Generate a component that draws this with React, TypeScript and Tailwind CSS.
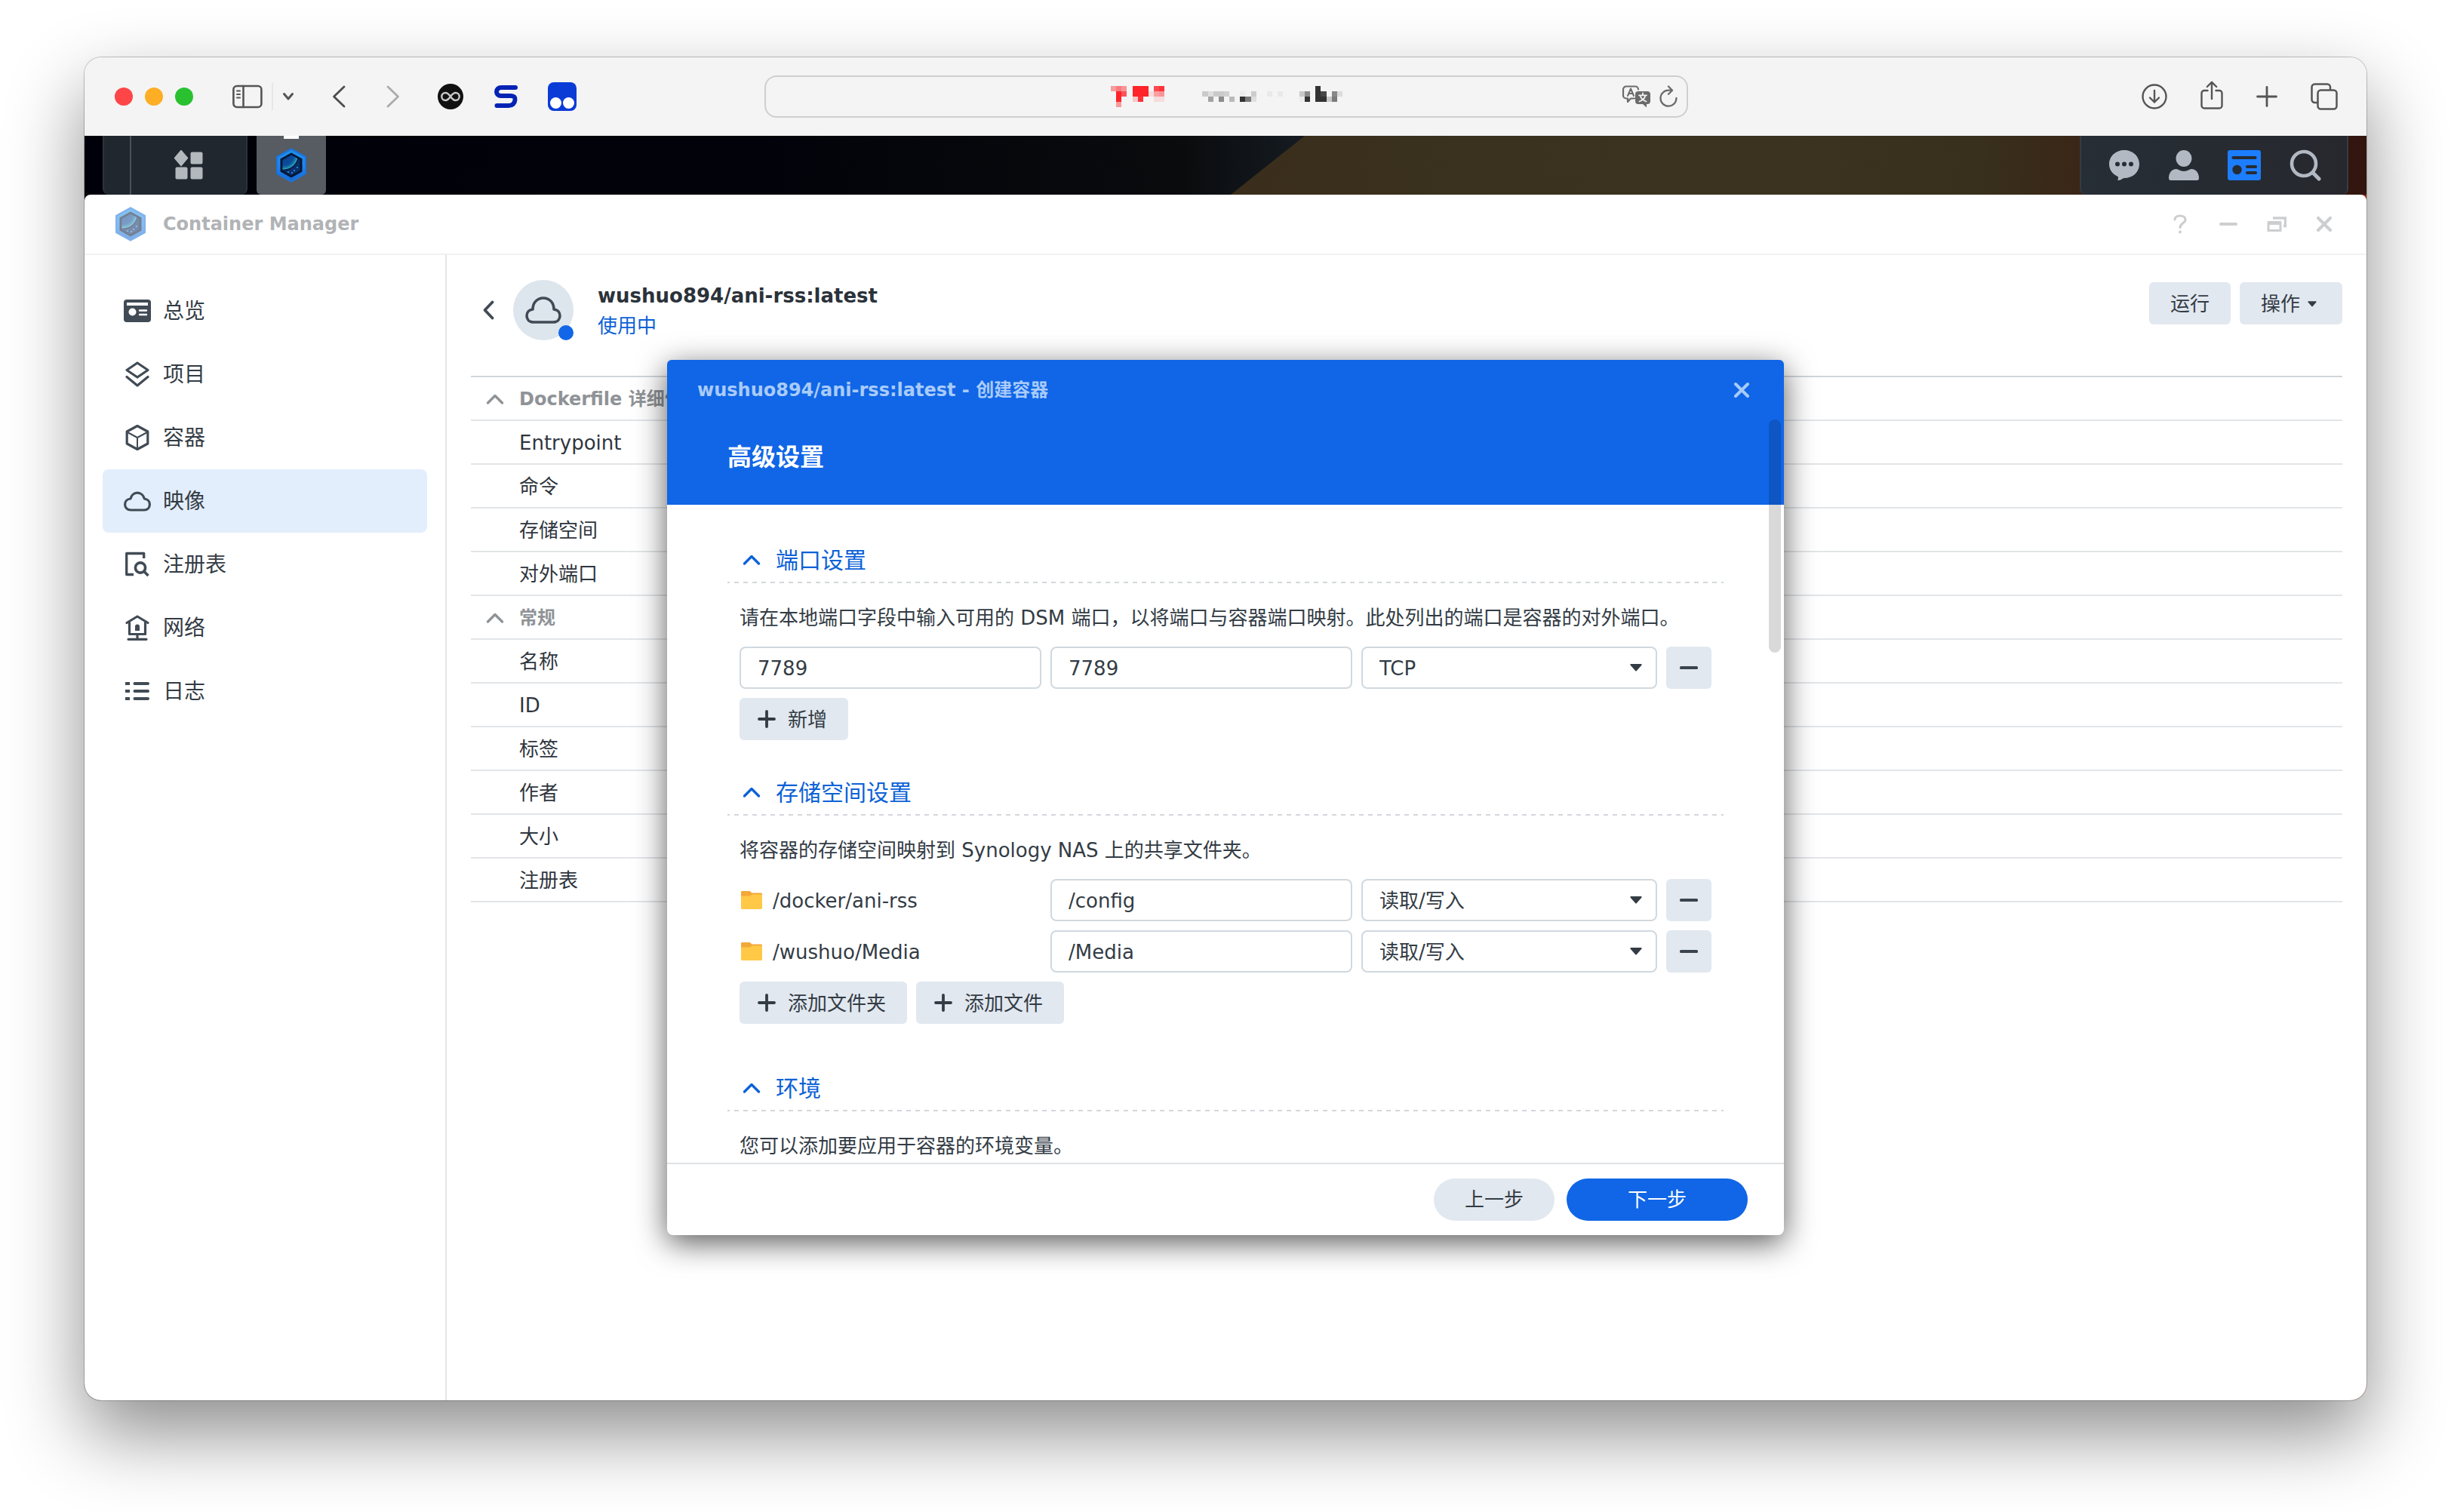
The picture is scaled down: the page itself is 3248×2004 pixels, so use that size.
import React, { useId, useState } from "react";

type IconProps = { className?: string };

/* ---------- browser toolbar icons ---------- */

const SidebarIcon = () => (
  <svg width="40" height="32" viewBox="0 0 40 32" fill="none" stroke="#555" strokeWidth="2.6" strokeLinecap="round">
    <rect x="1.4" y="2" width="37" height="28" rx="4.5" />
    <path d="M14.5 2v28" />
    <path d="M6 8.5h4M6 13h4M6 17.500h4" strokeWidth="2" />
  </svg>
);

const ChevronDownSmall = () => (
  <svg width="16" height="12" viewBox="0 0 16 12" fill="none" stroke="#555" strokeWidth="3" strokeLinecap="round" strokeLinejoin="round">
    <path d="M2.500 2.500l5.500 6.500 5.500-6.500" />
  </svg>
);

const NavChevron = ({ dir, className }: { dir: "left" | "right"; className: string }) => (
  <svg width="18" height="30" viewBox="0 0 18 30" fill="none" stroke="currentColor" strokeWidth="2.800" strokeLinecap="round" strokeLinejoin="round" className={className}>
    <path d={dir === "left" ? "M16 2L2.500 15 16 28" : "M2 2l13.500 13L2 28"} />
  </svg>
);

const InfinityBadge = () => (
  <svg width="34" height="34" viewBox="0 0 34 34" fill="none">
    <circle cx="17" cy="17" r="17" fill="#111" />
    <path
      d="M17 17c-2.500-3.500-4.500-5-6.700-5a5 5 0 000 10c2.200 0 4.200-1.500 6.700-5s4.500-5 6.700-5a5 5 0 010 10c-2.200 0-4.200-1.500-6.700-5z"
      stroke="#c9c9c9"
      strokeWidth="2.400"
    />
  </svg>
);

const SwooshBadge = () => (
  <svg width="34" height="34" viewBox="0 0 34 34" fill="none" stroke="#0523b4" strokeWidth="6" strokeLinejoin="round" strokeLinecap="round">
    <path d="M29 5H10.500C6 5 4 7.500 4 10.500S6 16 10 16h13c4.500 0 6 2.300 5.500 5.500-.5 4.500-3.500 7.500-8.500 7.500H4.500" />
  </svg>
);

const EyesBadge = () => (
  <svg width="38" height="38" viewBox="0 0 38 38">
    <rect width="38" height="38" rx="8" fill="#0a3bd6" />
    <circle cx="10.500" cy="27.500" r="7.500" fill="#fff" />
    <circle cx="27.500" cy="27.500" r="7.500" fill="#fff" />
  </svg>
);

const TranslateIcon = () => (
  <svg width="40" height="30" viewBox="0 0 40 30" fill="none" strokeLinejoin="round" strokeLinecap="round">
    <path d="M17 17.500h-5L8 22v-4.500H6A4 4 0 012 13.500v-8a4 4 0 014-4h12a4 4 0 014 4" stroke="#6b6b6b" strokeWidth="2.200" />
    <path d="M8 14l4-9.500L16 14M9.400 11h5.200" stroke="#6b6b6b" strokeWidth="2" />
    <path d="M22 8h12a4 4 0 014 4v9a4 4 0 01-4 4h-1v4.500L28 25h-6a4 4 0 01-4-4v-9a4 4 0 014-4z" fill="#6b6b6b" />
    <path d="M28 10.500v2.500M23 13.300h10M31.500 13.500c-1 4-4 6.500-8 8M24.500 13.500c1 4 4 6.500 8 8" stroke="#f3f3f3" strokeWidth="1.800" />
  </svg>
);

const ReloadIcon = () => (
  <svg width="24" height="30" viewBox="0 0 24 30" fill="none" stroke="#6b6b6b" strokeWidth="2.300" strokeLinecap="round" strokeLinejoin="round">
    <path d="M22.500 17A10.500 10.500 0 1112 6.600h4.500" />
    <path d="M12 1.500l5 5.200-5 5" />
  </svg>
);

const DownloadIcon = () => (
  <svg width="34" height="34" viewBox="0 0 34 34" fill="none" stroke="#555" strokeWidth="2.400" strokeLinecap="round" strokeLinejoin="round">
    <circle cx="17" cy="17" r="15.500" />
    <path d="M17 9v15.500M11 18.500l6 6 6-6" />
  </svg>
);

const ShareIcon = () => (
  <svg width="30" height="38" viewBox="0 0 30 38" fill="none" stroke="#555" strokeWidth="2.400" strokeLinecap="round" strokeLinejoin="round">
    <path d="M9.500 13H5a3.500 3.500 0 00-3.500 3.500V33A3.500 3.500 0 005 36.500h20a3.500 3.500 0 003.500-3.500V16.500A3.500 3.500 0 0025 13h-4.500" />
    <path d="M15 24V2M8.800 8L15 1.800 21.200 8" />
  </svg>
);

const NewTabIcon = () => (
  <svg width="28" height="28" viewBox="0 0 28 28" fill="none" stroke="#555" strokeWidth="2.800" strokeLinecap="round">
    <path d="M14 1.500v25M1.500 14h25" />
  </svg>
);

const TabsIcon = () => (
  <svg width="36" height="36" viewBox="0 0 36 36" fill="none" stroke="#555" strokeWidth="2.500" strokeLinejoin="round">
    <path d="M9 26H5.500A4 4 0 011.500 22V5.500a4 4 0 014-4H22a4 4 0 014 4V9" />
    <rect x="9.500" y="9.500" width="25" height="25" rx="4" />
  </svg>
);

/* ---------- desktop bar icons ---------- */

const LauncherIcon = () => (
  <svg width="40" height="40" viewBox="0 0 40 40" fill="#b3b8bd">
    <path d="M10 0.500l8.500 10L10 20.500 1.500 10.500z" stroke="#b3b8bd" strokeWidth="1.500" strokeLinejoin="round" />
    <rect x="22.500" y="2.500" width="16" height="16" rx="2" />
    <rect x="2.500" y="22.500" width="16" height="16" rx="2" />
    <rect x="22.500" y="22.500" width="16" height="16" rx="2" />
  </svg>
);

const ContainerLogo = ({ className }: IconProps) => {
  const id = useId();
  return (
    <svg width="42" height="46" viewBox="0 0 42 46" className={className}>
      <defs>
        <linearGradient id={id + "a"} x1="0" y1="0" x2="0" y2="1">
          <stop offset="0" stopColor="#1f8fe6" />
          <stop offset="0.5" stopColor="#2187f0" />
          <stop offset="1" stopColor="#1467d2" />
        </linearGradient>
        <radialGradient id={id + "b"} gradientUnits="userSpaceOnUse" cx="11" cy="10" r="18.5">
          <stop offset="0" stopColor="#0a3f8c" />
          <stop offset="0.7" stopColor="#0b4c9a" />
          <stop offset="0.88" stopColor="#1678a8" />
          <stop offset="1" stopColor="#3cb6c0" />
        </radialGradient>
        <clipPath id={id + "c"}>
          <path d="M21 9.500l11.500 6.400v14.200L21 36.500 9.500 30.100V15.900z" />
        </clipPath>
      </defs>
      <path d="M21 1.500L40 12v22L21 44.500 2 34V12z" fill={"url(#" + id + "a)"} stroke="#1a74dc" strokeWidth="2" strokeLinejoin="round" />
      <path d="M21 6.500l14.500 8v17L21 39.500 6.500 31.500v-17z" fill="#061632" />
      <g clipPath={"url(#" + id + "c)"}>
        <rect width="42" height="46" fill="#07316e" />
        <circle cx="11" cy="10" r="20.500" fill="#06204e" />
        <circle cx="11" cy="10" r="18.5" fill={"url(#" + id + "b)"} />
        <circle cx="17" cy="32" r="0.900" fill="#4aa4f5" />
        <circle cx="22" cy="33" r="0.900" fill="#4aa4f5" />
        <circle cx="25" cy="30" r="0.900" fill="#4aa4f5" />
        <circle cx="29" cy="26" r="0.900" fill="#4aa4f5" />
      </g>
    </svg>
  );
};

const ChatIcon = () => (
  <svg width="42" height="42" viewBox="0 0 42 42">
    <path d="M21 1c11 0 20 8 20 18.500S32.500 38 21 38c-1.500 0-2.500 1-4 2-1.500.8-3.500 1.200-5 1 1-1.500 1.200-3 .8-4.800C5.500 33 1 27 1 19.500 1 9 10 1 21 1z" fill="#b3b9c3" />
    <circle cx="12" cy="19.500" r="3" fill="#262c33" />
    <circle cx="21" cy="19.500" r="3" fill="#262c33" />
    <circle cx="30" cy="19.500" r="3" fill="#262c33" />
  </svg>
);

const UserIcon = () => (
  <svg width="42" height="42" viewBox="0 0 42 42" fill="#b3b9c3">
    <ellipse cx="21" cy="12" rx="10.500" ry="11" />
    <path d="M1 38c0-7 4-12 10-12 2.500 0 5 3 10 3s7.500-3 10-3c6 0 10 5 10 12 0 2-1 3-2.500 3h-35C2 41 1 40 1 38z" />
  </svg>
);

const WidgetIcon = () => (
  <svg width="46" height="42" viewBox="0 0 46 42">
    <rect x="1" y="1" width="44" height="40" rx="3" fill="#1c7dff" />
    <path d="M8.500 11h29M27 23h11M27 31h11" stroke="#262c33" strokeWidth="4.200" strokeLinecap="round" />
    <circle cx="13.500" cy="27" r="6.200" fill="#262c33" />
  </svg>
);

const SearchIcon = () => (
  <svg width="42" height="42" viewBox="0 0 42 42" fill="none" stroke="#b3b9c3" strokeLinecap="round">
    <circle cx="19" cy="19" r="16" strokeWidth="4.600" />
    <path d="M31 31l8 8" strokeWidth="5" />
  </svg>
);

/* ---------- app navigation icons ---------- */

const OverviewIcon = () => (
  <svg width="36" height="36" viewBox="0 0 36 36">
    <rect x="0" y="3" width="36" height="30" rx="4" fill="#414b55" />
    <rect x="4" y="7" width="28" height="4" fill="#fff" />
    <circle cx="11.500" cy="19.500" r="5" fill="#fff" />
    <path d="M21 17.500h9M21 23h9" stroke="#fff" strokeWidth="2.400" strokeLinecap="round" />
  </svg>
);

const ProjectIcon = () => (
  <svg width="36" height="36" viewBox="0 0 36 36" fill="none" stroke="#414b55" strokeWidth="3.200" strokeLinejoin="round" strokeLinecap="round">
    <path d="M18 3l14 9.500L18 22 4 12.500z" />
    <path d="M4 21.500L18 33l14-11.500" />
  </svg>
);

const CubeIcon = () => (
  <svg width="36" height="36" viewBox="0 0 36 36" fill="none" stroke="#414b55" strokeLinejoin="round" strokeLinecap="round">
    <path d="M18 2.500l13.800 7.500v16L18 33.500 4.200 26V10z" strokeWidth="3.200" />
    <path d="M6 11.500l12 6.500 12-6.500M18 18v14" strokeWidth="2" />
  </svg>
);

const CloudNavIcon = () => (
  <svg width="36" height="36" viewBox="0 0 36 36" fill="none" stroke="#414b55" strokeWidth="3.200" strokeLinejoin="round">
    <path d="M9.500 30C4.500 30 1.600 26.800 1.600 22.500c0-4 3-7 7.400-7.500 1-4.500 4.500-7.800 9-7.800s8.300 3.300 9.300 7.800c4 .5 7.100 3.600 7.100 7.500 0 4.300-2.900 7.500-7.400 7.500z" />
  </svg>
);

const RegistryIcon = () => (
  <svg width="36" height="36" viewBox="0 0 36 36" fill="none" stroke="#414b55" strokeWidth="3.300" strokeLinejoin="round">
    <path d="M13 31.500H3.700v-28h23V10" />
    <circle cx="22" cy="22.500" r="6.600" strokeWidth="3.600" />
    <path d="M27 27.500l5.500 5.500" strokeWidth="3.600" />
  </svg>
);

const NetworkIcon = () => (
  <svg width="36" height="36" viewBox="0 0 36 36" fill="none" stroke="#414b55" strokeWidth="3.200" strokeLinejoin="round" strokeLinecap="round">
    <path d="M4 11.500L18 3l14 8.500M7.500 11v15.500h21V11M18 27v5M6 33.300h24" />
    <path d="M18 13.500a3 3 0 013 3V22h-6v-5.500a3 3 0 013-3z" fill="#414b55" stroke="none" />
  </svg>
);

const LogIcon = () => (
  <svg width="36" height="36" viewBox="0 0 36 36" fill="none" stroke="#414b55" strokeWidth="4">
    <path d="M2 8h6M2 18h6M2 28h6" />
    <path d="M14.500 8H32M14.500 18H32M14.500 28H32" strokeLinecap="round" />
  </svg>
);

/* ---------- shared glyphs ---------- */

const ChevronUp = ({ className }: IconProps) => (
  <svg width="24" height="16" viewBox="0 0 24 16" fill="none" stroke="currentColor" strokeWidth="3.400" strokeLinecap="round" strokeLinejoin="round" className={className}>
    <path d="M2.500 13L12 3.500 21.500 13" />
  </svg>
);

const Caret = ({ className }: IconProps) => (
  <svg width="16" height="10" viewBox="0 0 16 10" fill="#333c45" className={className}>
    <path d="M1.500 0h13c1 0 1.500 1 .8 1.800L8.900 9a1.200 1.200 0 01-1.800 0L.700 1.800C0 1 .5 0 1.500 0z" />
  </svg>
);

const PlusIcon = () => (
  <svg width="24" height="24" viewBox="0 0 24 24" fill="none" stroke="#333c45" strokeWidth="3.800" strokeLinecap="round">
    <path d="M12 2v20M2 12h20" />
  </svg>
);

const MinusIcon = () => (
  <svg width="24" height="4" viewBox="0 0 24 4">
    <rect width="24" height="4" rx="1.500" fill="#3a444e" />
  </svg>
);

const FolderIcon = () => (
  <svg width="28" height="24" viewBox="0 0 28 24">
    <path d="M1.500 0H11c.8 0 1.500.3 2 1l1.300 1.500H26.500c.8 0 1.500.7 1.500 1.500v8H0V1.500C0 .7.700 0 1.500 0z" fill="#f2a838" />
    <path d="M0 6.500h12.500l2-2H28v18c0 .8-.7 1.500-1.500 1.500h-25C.7 24 0 23.300 0 22.500z" fill="#ffc846" />
  </svg>
);

/* ---------- browser chrome ---------- */

/* Redacted address: mosaic cells as [column, row, colour] */
const mosaic: [number, number, string][] = [
  [0, 0, "#f99a9c"], [1, 0, "#f97a7d"], [2, 0, "#f99496"], [4, 0, "#ff2429"], [5, 0, "#ff2429"], [6, 0, "#ff2429"], [8, 0, "#fb4a4f"], [9, 0, "#fb3339"],
  [1, 1, "#ff2429"], [2, 1, "#fb5559"], [4, 1, "#ff2429"], [5, 1, "#ff2429"], [6, 1, "#ff2429"], [7, 1, "#f6dcdc"], [8, 1, "#f9a0a2"], [9, 1, "#f99496"],
  [1, 2, "#ff2429"], [4, 2, "#f7c6c7"], [5, 2, "#fb3339"], [8, 2, "#f6dcdc"], [9, 2, "#f6dcdc"], [1, 3, "#f99a9c"],
  [17, 1, "#cacaca"], [18, 1, "#dedede"], [19, 1, "#cacaca"], [20, 1, "#cacaca"], [21, 1, "#d0d0d0"], [24, 1, "#ececec"], [26, 1, "#cccccc"],
  [18, 2, "#a3a3a3"], [20, 2, "#8c8c8c"], [22, 2, "#bababa"], [24, 2, "#333333"], [25, 2, "#7b7b7b"], [26, 2, "#dedede"],
  [29, 1, "#e9e9e9"], [31, 1, "#e9e9e9"],
  [35, 1, "#c8c8c8"], [36, 1, "#8a8a8a"], [36, 2, "#333333"], [35, 2, "#ebebeb"],
  [38, 0, "#333333"], [38, 1, "#333333"], [38, 2, "#333333"], [39, 1, "#484848"], [39, 2, "#333333"], [40, 2, "#c8c8c8"], [41, 1, "#888888"], [41, 2, "#7b7b7b"], [42, 1, "#dcdcdc"],
];

const RedactedAddress = () => (
  <svg width="307" height="28" viewBox="0 0 43 4" preserveAspectRatio="none" shapeRendering="crispEdges" role="img" aria-label="address">
    {mosaic.map(([x, y, fill]) => (
      <rect key={x + "-" + y} x={x} y={y} width="1" height="1" fill={fill} />
    ))}
  </svg>
);

function BrowserToolbar() {
  return (
    <header className="flex h-[104px] shrink-0 items-center justify-between bg-[#f4f4f4] pr-[38px] pl-10">
      <div className="flex flex-1 items-center">
        <div className="flex gap-4">
          <button aria-label="close" className="size-6 rounded-full bg-[#fe4548]" />
          <button aria-label="minimise" className="size-6 rounded-full bg-[#fdae24]" />
          <button aria-label="zoom" className="size-6 rounded-full bg-[#2ac131]" />
        </div>
        <button aria-label="sidebar" className="ml-[52px]"><SidebarIcon /></button>
        <span className="mx-3 h-9 w-0.5 bg-[#e6e6e6]" />
        <button aria-label="tab groups"><ChevronDownSmall /></button>
        <button aria-label="back" className="ml-[50px]"><NavChevron dir="left" className="text-[#4d4d4d]" /></button>
        <button aria-label="forward" className="ml-[54px]"><NavChevron dir="right" className="text-[#ababab]" /></button>
        <button aria-label="infinity extension" className="ml-[50px]"><InfinityBadge /></button>
        <button aria-label="s extension" className="ml-10"><SwooshBadge /></button>
        <button aria-label="eyes extension" className="ml-[38px]"><EyesBadge /></button>
      </div>
      <div className="relative flex h-14 w-[1224px] items-center justify-center rounded-[16px] border-2 border-[#cfcfcf]">
        <RedactedAddress />
        <div className="absolute right-3 flex items-center gap-2.5">
          <button aria-label="translate"><TranslateIcon /></button>
          <button aria-label="reload"><ReloadIcon /></button>
        </div>
      </div>
      <div className="flex flex-1 items-center justify-end gap-[44px]">
        <button aria-label="downloads"><DownloadIcon /></button>
        <button aria-label="share" className="pb-1"><ShareIcon /></button>
        <button aria-label="new tab"><NewTabIcon /></button>
        <button aria-label="tabs"><TabsIcon /></button>
      </div>
    </header>
  );
}

function DesktopBar() {
  return (
    <div className="relative flex h-[78px] shrink-0 justify-between bg-[linear-gradient(90deg,#00000a_0%,#02030a_30%,#0a0b0d_48%,#141a20_53%)] pr-6 pl-6">
      <div className="absolute inset-y-0 right-0 w-[1505px] bg-[linear-gradient(90deg,#3a2d1b_0%,#3a321f_25%,#3b3220_50%,#38301d_65%,#3a2618_75%,#33150f_100%)] [clip-path:polygon(98px_0,100%_0,100%_100%,0_100%)]" />
      <div className="relative flex gap-3">
        <div className="flex w-[192px] rounded-b-[8px] border-r-2 border-l-2 border-[#2c333b] bg-[#20272e]">
          <div className="w-9 border-r-2 border-[#4a5158]" />
          <button aria-label="main menu" className="flex flex-1 items-center justify-center"><LauncherIcon /></button>
        </div>
        <button aria-label="Container Manager" className="relative flex w-[92px] items-center justify-center rounded-b-[6px] bg-[#575b62]">
          <span className="absolute top-0 h-1 w-5 bg-white" />
          <ContainerLogo />
        </button>
      </div>
      <div className="relative flex w-[356px] items-center justify-between rounded-b-[8px] border-x-2 border-[#363b41] bg-[linear-gradient(90deg,#262e36,#27282e)] pr-[34px] pl-[36px]">
        <button aria-label="messages"><ChatIcon /></button>
        <button aria-label="account"><UserIcon /></button>
        <button aria-label="widgets"><WidgetIcon /></button>
        <button aria-label="search"><SearchIcon /></button>
      </div>
    </div>
  );
}

/* ---------- app window ---------- */

function AppTitleBar() {
  return (
    <div className="flex h-20 shrink-0 items-center justify-between border-b-2 border-[#f0f1f2] pr-11 pl-10">
      <div className="flex items-center gap-[22px]">
        <ContainerLogo className="opacity-55" />
        <h1 className="text-[24px] leading-8 font-bold text-[#b1b3b6]">Container Manager</h1>
      </div>
      <div className="flex items-center gap-[38px] text-[#cdced0]">
        <button aria-label="help">
          <svg width="26" height="26" viewBox="-3 0 26 26" fill="none" stroke="currentColor" strokeWidth="3.200" strokeLinecap="round" strokeLinejoin="round">
            <path d="M3 7c0-3.200 3-5 7-5s7 2 7 5.200c0 4.300-7 5-7 10.300" />
            <circle cx="10" cy="23.500" r="2" fill="currentColor" stroke="none" />
          </svg>
        </button>
        <button aria-label="minimise window">
          <svg width="26" height="26" viewBox="0 0 26 26"><rect x="1" y="11" width="24" height="4" rx="2" fill="currentColor" /></svg>
        </button>
        <button aria-label="restore window">
          <svg width="26" height="26" viewBox="0 0 26 26" fill="none" stroke="currentColor">
            <path d="M8 5h16.500v10.500H22" strokeWidth="3.400" />
            <path d="M2 21.500v-10h16v10z" strokeWidth="3" />
            <path d="M1 11.500h18" strokeWidth="5" />
          </svg>
        </button>
        <button aria-label="close window">
          <svg width="24" height="24" viewBox="0 0 24 24" stroke="currentColor" strokeWidth="4.200" strokeLinecap="round"><path d="M4 4l16 16M20 4L4 20" /></svg>
        </button>
      </div>
    </div>
  );
}

const navItems = [
  { label: "总览", Icon: OverviewIcon },
  { label: "项目", Icon: ProjectIcon },
  { label: "容器", Icon: CubeIcon },
  { label: "映像", Icon: CloudNavIcon, active: true },
  { label: "注册表", Icon: RegistryIcon },
  { label: "网络", Icon: NetworkIcon },
  { label: "日志", Icon: LogIcon },
];

function Sidebar() {
  return (
    <nav className="w-[480px] shrink-0 border-r-2 border-[#e3e5e8] px-6 pt-8">
      {navItems.map(({ label, Icon, active }) => (
        <a
          key={label}
          href="#"
          className={"flex h-[84px] items-center gap-4 rounded-[8px] px-7 text-[28px] text-[#343c45] " + (active ? "bg-[#e3eefc]" : "")}
        >
          <Icon />
          <span className="pt-0.5">{label}</span>
        </a>
      ))}
    </nav>
  );
}

const detailGroups = [
  { title: "Dockerfile 详细信息", rows: ["Entrypoint", "命令", "存储空间", "对外端口"] },
  { title: "常规", rows: ["名称", "ID", "标签", "作者", "大小", "注册表"] },
];

function ImageDetail() {
  return (
    <main className="min-w-0 flex-1 px-8 pt-8">
      <div className="flex h-20 items-start justify-between">
        <div className="flex items-center pl-3.5">
          <button aria-label="back to list">
            <svg width="20" height="28" viewBox="0 0 20 28" fill="none" stroke="#414b55" strokeWidth="3.800" strokeLinecap="round" strokeLinejoin="round"><path d="M14.500 3.500L4.500 14l10 10.500" /></svg>
          </button>
          <div className="relative ml-[22px] flex size-20 items-center justify-center rounded-full bg-[#dde5ed]">
            <svg width="50" height="36" viewBox="0 0 50 36" fill="none" stroke="#414b55" strokeWidth="3.600" strokeLinejoin="round">
              <path d="M12 34C6 34 3 30 3 25.500c0-5 3.500-8 8-8.500C11 8 17 2 25 2s14 6 14 15c4.500.5 8 3.500 8 8.500 0 4.500-3 8.500-9 8.500z" />
            </svg>
            <span className="absolute right-0 bottom-0 size-5 rounded-full bg-[#1266e8]" />
          </div>
          <div className="ml-8 pt-0.5">
            <h2 className="text-[26px] leading-10 font-bold text-[#2b323a]">wushuo894/ani-rss:latest</h2>
            <p className="text-[26px] leading-10 text-[#0d62d6]">使用中</p>
          </div>
        </div>
        <div className="mt-1 flex gap-3 text-[26px] text-[#333c45]">
          <button className="h-14 rounded-[6px] bg-[#e2e8ef] px-7 pt-0.5">运行</button>
          <button className="flex h-14 items-center gap-2.5 rounded-[6px] bg-[#e2e8ef] pt-0.5 pr-[34px] pl-7">操作<Caret className="h-2 w-3" /></button>
        </div>
      </div>
      <div className="mt-12 border-t-2 border-[#cfd6dc]">
        <table className="w-full border-separate border-spacing-0 text-left text-[26px] leading-8 text-[#2f363e]">
          {detailGroups.map((group) => (
            <tbody key={group.title}>
              <tr>
                <th scope="rowgroup" className="h-[58px] border-b-2 border-[#e2e5e8] p-0 pt-0.5 pl-5 text-[24px] font-bold text-[#8f9397]">
                  <button className="flex items-center gap-5">
                    <ChevronUp />
                    {group.title}
                  </button>
                </th>
              </tr>
              {group.rows.map((row) => (
                <tr key={row}>
                  <td className="h-[58px] border-b-2 border-[#e2e5e8] p-0 pt-0.5 pl-16">{row}</td>
                </tr>
              ))}
            </tbody>
          ))}
        </table>
      </div>
    </main>
  );
}

/* ---------- dialog ---------- */

function TextField({ label, initial }: { label: string; initial: string }) {
  const [value, setValue] = useState(initial);
  return (
    <input
      aria-label={label}
      value={value}
      onChange={(e) => setValue(e.target.value)}
      className="h-14 w-full rounded-[8px] border-2 border-[#d0d8df] bg-white px-[22px] pt-0.5 text-[26px] text-[#333c45] outline-none"
    />
  );
}

function SelectField({ label, options }: { label: string; options: string[] }) {
  return (
    <div className="relative">
      <select aria-label={label} className="h-14 w-full appearance-none rounded-[8px] border-2 border-[#d0d8df] bg-white px-[22px] pt-0.5 text-[26px] text-[#333c45] outline-none">
        {options.map((o) => (
          <option key={o}>{o}</option>
        ))}
      </select>
      <Caret className="pointer-events-none absolute top-[23px] right-5" />
    </div>
  );
}

const RemoveButton = () => (
  <button aria-label="移除" className="flex h-14 items-center justify-center rounded-[6px] bg-[#e2e8ef]">
    <MinusIcon />
  </button>
);

const AddButton = ({ children }: { children: React.ReactNode }) => (
  <button className="flex h-14 items-center gap-4 rounded-[6px] bg-[#e2e8ef] pr-7 pl-6 text-[26px] text-[#333c45]">
    <PlusIcon />
    <span className="pt-0.5">{children}</span>
  </button>
);

function Section({ title, description, children }: { title: string; description: string; children?: React.ReactNode }) {
  return (
    <section>
      <button className="flex h-14 w-full items-center gap-5 pb-0.5 pl-5 text-[30px] text-[#0d62d6]">
        <ChevronUp />
        {title}
      </button>
      <div className="h-0.5 bg-[repeating-linear-gradient(90deg,#d3d7db_0px,#d3d7db_3px,transparent_3px,transparent_9px,#d3d7db_9px,#d3d7db_12px)]" />
      <div className="px-4 pt-[26px]">
        <p className="text-[26px] leading-10 whitespace-nowrap text-[#333c45]">{description}</p>
        {children && <div className="mt-[18px] space-y-3">{children}</div>}
      </div>
    </section>
  );
}

const FieldRow = ({ children }: { children: React.ReactNode }) => (
  <div className="grid grid-cols-[400px_400px_1fr_60px] gap-3">{children}</div>
);

const volumes = [
  { host: "/docker/ani-rss", mount: "/config" },
  { host: "/wushuo/Media", mount: "/Media" },
];

function CreateContainerDialog() {
  return (
    <div role="dialog" aria-label="创建容器" className="relative w-[1480px] overflow-visible rounded-[8px] bg-white shadow-[0_10px_40px_rgba(0,0,0,0.65)]">
      <div className="h-[192px] rounded-t-[6px] bg-[#1066e6]">
        <div className="flex h-20 items-center justify-between pr-11 pl-10 text-[#a9cbfa]">
          <h2 className="text-[24px] font-bold">wushuo894/ani-rss:latest - 创建容器</h2>
          <button aria-label="关闭">
            <svg width="24" height="24" viewBox="0 0 24 24" stroke="currentColor" strokeWidth="4" strokeLinecap="round"><path d="M4 4l16 16M20 4L4 20" /></svg>
          </button>
        </div>
        <h3 className="pl-20 text-[32px] leading-[98px] font-bold text-white">高级设置</h3>
      </div>
      <div className="h-[872px] overflow-hidden pt-[46px] pr-20 pl-20">
        <Section title="端口设置" description="请在本地端口字段中输入可用的 DSM 端口，以将端口与容器端口映射。此处列出的端口是容器的对外端口。">
          <FieldRow>
            <TextField label="本地端口" initial="7789" />
            <TextField label="容器端口" initial="7789" />
            <SelectField label="类型" options={["TCP", "UDP"]} />
            <RemoveButton />
          </FieldRow>
          <div className="flex">
            <AddButton>新增</AddButton>
          </div>
        </Section>
        <div className="mt-[42px] mb-[58px]">
          <Section title="存储空间设置" description="将容器的存储空间映射到 Synology NAS 上的共享文件夹。">
            {volumes.map((v) => (
              <FieldRow key={v.host}>
                <div className="flex items-center gap-3.5 pl-0.5 text-[26px] text-[#333c45]">
                  <FolderIcon />
                  <span className="pt-0.5">{v.host}</span>
                </div>
                <TextField label={v.host + " 装载路径"} initial={v.mount} />
                <SelectField label={v.host + " 权限"} options={["读取/写入", "只读"]} />
                <RemoveButton />
              </FieldRow>
            ))}
            <div className="flex gap-3">
              <AddButton>添加文件夹</AddButton>
              <AddButton>添加文件</AddButton>
            </div>
          </Section>
        </div>
        <Section title="环境" description="您可以添加要应用于容器的环境变量。" />
      </div>
      <div className="flex h-24 items-center justify-end gap-4 border-t-2 border-[#dfe2e5] pr-12 text-[26px]">
        <button className="h-14 w-40 rounded-full bg-[#e2e8ef] text-[#333c45]">上一步</button>
        <button className="h-14 w-60 rounded-full bg-[#1066e6] text-white">下一步</button>
      </div>
      <div className="absolute top-[79px] right-1 h-[309px] w-4 rounded-full bg-black/15" />
    </div>
  );
}

export default function App() {
  return (
    <div className="flex min-h-screen flex-col bg-white px-28 pt-[76px] pb-[148px] font-['DejaVu_Sans','Noto_Sans_CJK_SC',sans-serif]">
      <div className="flex flex-1 flex-col overflow-hidden rounded-[22px] bg-white shadow-[0_0_0_1px_rgba(0,0,0,0.22),0_44px_100px_rgba(0,0,0,0.45)]">
        <BrowserToolbar />
        <DesktopBar />
        <div className="flex flex-1 flex-col bg-[linear-gradient(90deg,#00000a_50%,#8c2a16_100%)]">
          <div className="relative flex flex-1 flex-col rounded-t-[8px] bg-white">
            <AppTitleBar />
            <div className="flex flex-1">
              <Sidebar />
              <ImageDetail />
            </div>
            <div className="absolute inset-0 flex items-center justify-center">
              <CreateContainerDialog />
            </div>
          </div>
        </div>
      </div>
    </div>
  );
}
